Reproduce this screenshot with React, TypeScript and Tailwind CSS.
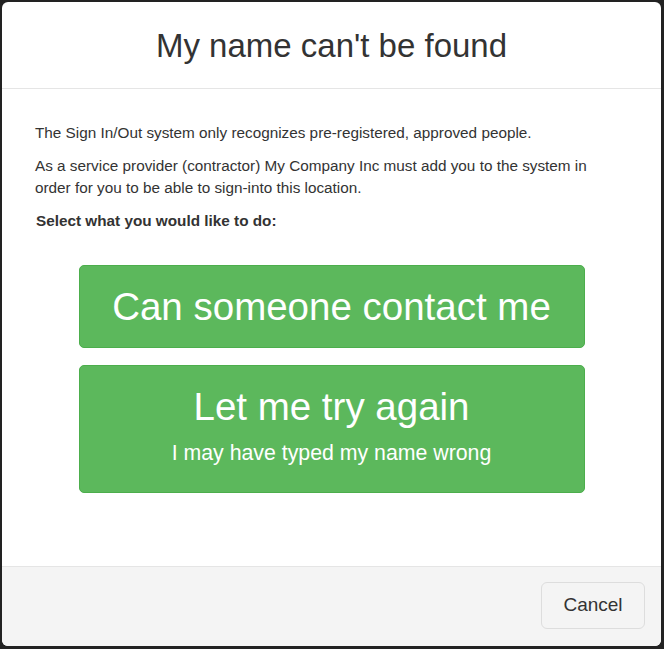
export default function App() {
  return (
    <div className="min-h-screen bg-[#222222] pl-[2px] pt-[2px] font-['Liberation_Sans',Arial,sans-serif] text-[#333333]">
      <div className="flex h-[644px] w-[659px] flex-col overflow-hidden rounded-[6px] bg-white">
        <div className="flex h-[87px] shrink-0 items-center justify-center border-b border-[#e5e5e5]">
          <h1 className="text-[33px] leading-none">My name can't be found</h1>
        </div>

        <div className="flex-1 pt-[33px] text-[15.3px] leading-[22px]">
          <div className="pl-[33px] pr-[60px]">
            <p className="mb-[11px]">The Sign In/Out system only recognizes pre-registered, approved people.</p>
            <p className="mb-[11px]">
              As a service provider (contractor) My Company Inc must add you to the system in order for you to be able
              to sign-into this location.
            </p>
            <p className="pl-px font-bold">Select what you would like to do:</p>
          </div>

          <div className="mt-[33px] flex flex-col items-center gap-[17px]">
            <button
              type="button"
              className="flex h-[83px] w-[506px] items-center justify-center rounded-[5px] border border-[#4cae4c] bg-[#5cb85c] text-[38.5px] text-white"
            >
              Can someone contact me
            </button>
            <button
              type="button"
              className="flex h-[128px] w-[506px] flex-col items-center rounded-[5px] border border-[#4cae4c] bg-[#5cb85c] pt-[19px] text-white"
            >
              <span className="text-[38.5px] leading-[44px]">Let me try again</span>
              <span className="mt-[12px] text-[21.3px] leading-[24px]">I may have typed my name wrong</span>
            </button>
          </div>
        </div>

        <div className="flex h-[80px] shrink-0 items-start justify-end border-t border-[#e5e5e5] bg-[#f4f4f4] pr-[16px] pt-[15px]">
          <button
            type="button"
            className="h-[47px] w-[104px] rounded-[6px] border border-[#dddddd] bg-[#f4f4f4] text-[19px] text-[#333333]"
          >
            Cancel
          </button>
        </div>
      </div>
    </div>
  );
}
